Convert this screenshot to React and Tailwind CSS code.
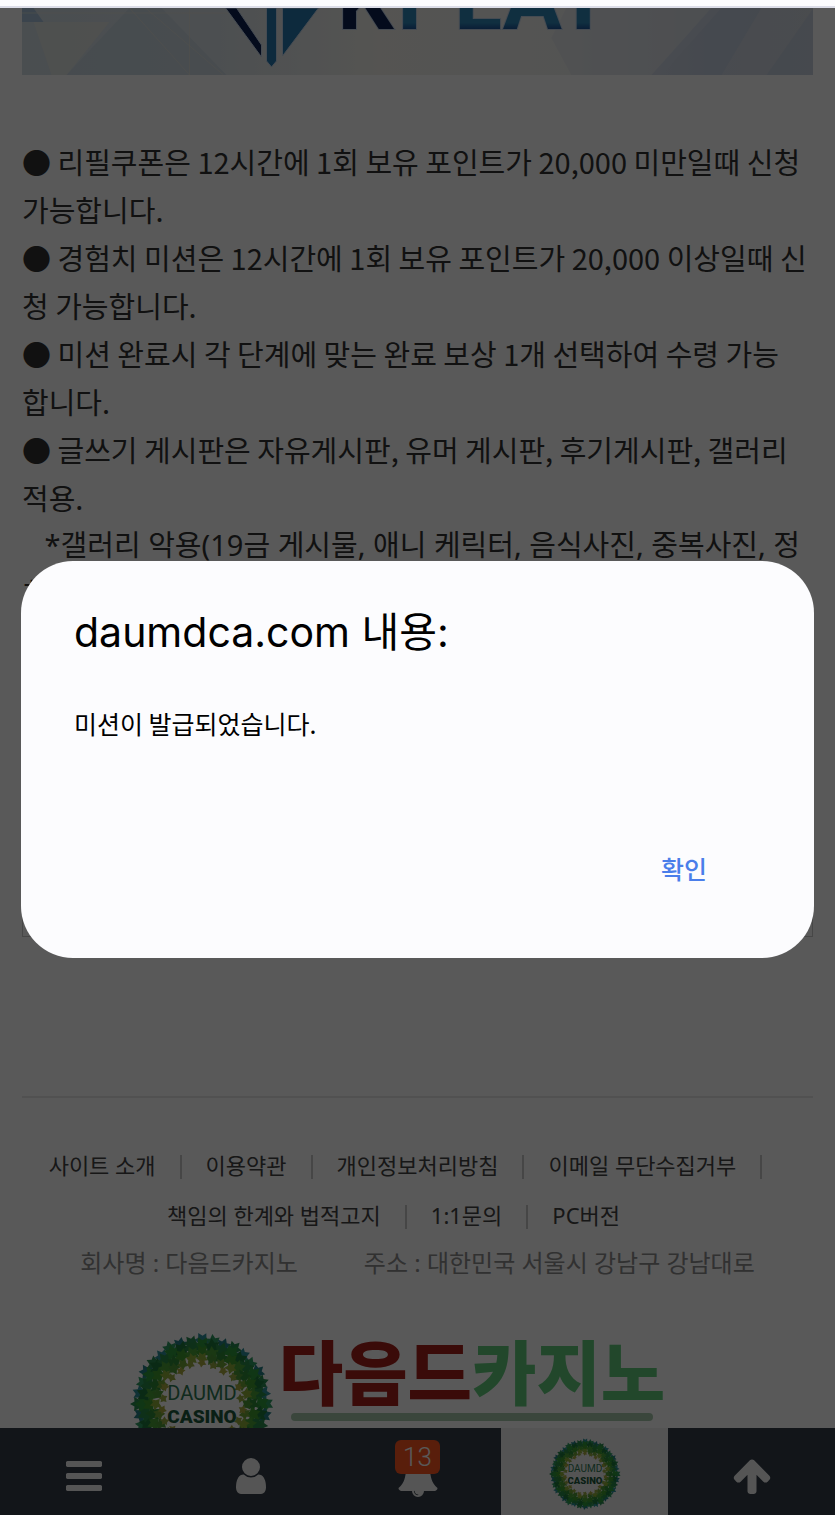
import React from 'react';

const notices = [
  ['● 리필쿠폰은 12시간에 1회 보유 포인트가 20,000 미만일때 신청 가능합니다.'],
  ['● 경험치 미션은 12시간에 1회 보유 포인트가 20,000 이상일때 신청 가능합니다.'],
  ['● 미션 완료시 각 단계에 맞는 완료 보상 1개 선택하여 수령 가능', '합니다.'],
  ['● 글쓰기 게시판은 자유게시판, 유머 게시판, 후기게시판, 갤러리 적용.'],
];

const footerLinks = [
  '사이트 소개',
  '이용약관',
  '개인정보처리방침',
  '이메일 무단수집거부',
  '책임의 한계와 법적고지',
  '1:1문의',
  'PC버전',
];

// Rings of leaves, from the outside in
const rings = [
  { count: 36, radius: 64, size: 1, colors: ['#2f8f9a', '#2f9a63', '#257f86', '#2a8a50'] },
  { count: 36, radius: 59, size: 1.1, colors: ['#2f9a3c', '#1f7a3c', '#2a8a48'] },
  { count: 32, radius: 52, size: 1, colors: ['#3f9a30', '#4aa038', '#2f8a38'] },
  { count: 28, radius: 46, size: 0.8, colors: ['#8fb03a', '#4f9838', '#6fa438'] },
  { count: 22, radius: 41, size: 0.6, colors: ['#a8a840', '#98aa44'] },
];

function WreathLogo({ className }) {
  return (
    <svg className={className} viewBox="0 0 144 144" role="img" aria-label="DAUMD CASINO">
      {rings.map((ring) =>
        Array.from({ length: ring.count }, (_, i) => (
          <path
            key={`${ring.radius}-${i}`}
            d="M0-8L2.500-3.500 7-4 4.500 1 5 6 0 4-5 6-4.500 1-7-4-2.500-3.500z"
            fill={ring.colors[i % ring.colors.length]}
            transform={`rotate(${(360 / ring.count) * i} 72 72) translate(72 ${72 - ring.radius + (i % 3)}) rotate(${(i % 5) * 14 - 28}) scale(${ring.size})`}
          />
        ))
      )}
      <text x="72" y="68" textAnchor="middle" fontFamily="Roboto, sans-serif" fontSize="20" fill="#2f7a55">
        DAUMD
      </text>
      <text x="72" y="91" textAnchor="middle" fontFamily="Roboto, sans-serif" fontSize="19" fontWeight="900" fill="#1d5a3c">
        CASINO
      </text>
    </svg>
  );
}

function Banner() {
  return (
    <svg className="block h-[67px] w-full" viewBox="0 0 792 67" preserveAspectRatio="xMidYMid slice" role="img" aria-label="KPLAY">
      <defs>
        <linearGradient id="sky" x1="0" x2="1" y1="0" y2="0">
          <stop offset="0" stopColor="#d3dee6" />
          <stop offset="0.25" stopColor="#dbe3e8" />
          <stop offset="0.45" stopColor="#f2f1ec" />
          <stop offset="0.7" stopColor="#eeefee" />
          <stop offset="0.88" stopColor="#cfd7e4" />
          <stop offset="1" stopColor="#d3d9e0" />
        </linearGradient>
        <linearGradient id="blue" gradientUnits="userSpaceOnUse" x1="0" x2="0" y1="0" y2="21">
          <stop offset="0.7" stopColor="#2f86b8" />
          <stop offset="1" stopColor="#1d559a" />
        </linearGradient>
      </defs>
      <rect width="792" height="67" fill="url(#sky)" />
      <path d="M0 0h12l10 14H0z" fill="#a8c4dc" />
      <path d="M108 0L45 67H205L140 0z" fill="#c4d3df" opacity="0.6" />
      <path d="M12 14H88L45 67H30z" fill="#ece9dc" opacity="0.5" />
      <path d="M108 0l60 67M124 0l78 67M168 0v67M0 5h210" stroke="#e8e4d8" strokeWidth="1" opacity="0.6" fill="none" />
      <path d="M530 30L550 67H640L700 0H545z" fill="#dfe4ea" opacity="0.7" />
      <path d="M690 0L630 67H700L740 0zM792 0L745 67H792z" fill="#b4c4de" opacity="0.35" />
      <g stroke="#c6d6ea" strokeWidth="1">
        <path d="M204 0h11l25 37v12z" fill="#0c2050" />
        <path d="M245 0h10v53l-5 6-5-6z" fill="#2678b0" />
        <path d="M261 0h36l-36 48z" fill="#2678b0" />
      </g>
      <g fontFamily="Roboto, sans-serif" fontWeight="700" fontSize="88" stroke="#c6d6ea" strokeWidth="2" paintOrder="stroke">
        <text x="316" y="21" fill="#0c2050">K</text>
        <text x="376" y="21" fill="url(#blue)">PLAY</text>
      </g>
    </svg>
  );
}

function NavIcon({ d }) {
  return (
    <svg className="mt-2 size-[42px] fill-current" viewBox="0 0 1792 1792" aria-hidden="true">
      <path d={d} />
    </svg>
  );
}

const icons = {
  menu: 'M1664 1344v128q0 26-19 45t-45 19h-1408q-26 0-45-19t-19-45v-128q0-26 19-45t45-19h1408q26 0 45 19t19 45zm0-512v128q0 26-19 45t-45 19h-1408q-26 0-45-19t-19-45v-128q0-26 19-45t45-19h1408q26 0 45 19t19 45zm0-512v128q0 26-19 45t-45 19h-1408q-26 0-45-19t-19-45v-128q0-26 19-45t45-19h1408q26 0 45 19t19 45z',
  user: 'M1536 1399q0 109-62.5 187t-150.5 78h-854q-88 0-150.5-78t-62.5-187q0-85 8.5-160.5t31.5-152 58.5-131 94-89 134.500-34.500q131 128 313 128t313-128q76 0 134.500 34.500t94 89 58.500 131 31.500 152 8.500 160.500zm-256-887q0 159-112.500 271.500t-271.500 112.500-271.500-112.500-112.500-271.500 112.500-271.500 271.500-112.500 271.500 112.500 112.500 271.500z',
  bell: 'M912 1696q0-16-16-16-59 0-101.500-42.500t-42.500-101.500q0-16-16-16t-16 16q0 73 51.500 124.500t124.500 51.500q16 0 16-16zm816-288q0 52-38 90t-90 38h-448q0 106-75 181t-181 75-181-75-75-181h-448q-52 0-90-38t-38-90q50-42 91-88t85-119.500 74.500-158.500 50-206 19.500-260q0-152 117-282.500t307-158.500q-8-19-8-39 0-40 28-68t68-28 68 28 28 68q0 20-8 39 190 28 307 158.500t117 282.500q0 139 19.500 260t50 206 74.500 158.500 85 119.500 91 88z',
  up: 'M1675 971q0 51-37 90l-75 75q-38 38-91 38-54 0-90-38l-294-293v704q0 52-37.500 84.500t-90.500 32.500h-128q-53 0-90.500-32.500t-37.500-84.500v-704l-294 293q-36 38-90 38t-90-38l-75-75q-38-38-38-90 0-53 38-91l651-651q35-37 90-37 54 0 91 37l651 651q37 39 37 91z',
};

function BottomNav() {
  const item = 'relative flex h-full items-center justify-center';

  return (
    <nav className="fixed inset-x-0 bottom-0 grid h-[87px] grid-cols-5 bg-[#343e49] text-[#f4f4f4]">
      <button type="button" aria-label="메뉴" className={item}>
        <NavIcon d={icons.menu} />
      </button>
      <button type="button" aria-label="내 정보" className={item}>
        <NavIcon d={icons.user} />
      </button>
      <button type="button" aria-label="알림" className={item}>
        <NavIcon d={icons.bell} />
        <span className="absolute top-3 rounded-md bg-[#ff5722] px-2 font-[Roboto,sans-serif] text-[26px] leading-[34px] font-light text-white">
          13
        </span>
      </button>
      <a href="#home" className={`${item} bg-[#efefef]`}>
        <WreathLogo className="mt-1 size-[72px]" />
      </a>
      <button type="button" aria-label="맨 위로" className={item}>
        <NavIcon d={icons.up} />
      </button>
    </nav>
  );
}

function AlertDialog() {
  return (
    <div className="fixed inset-x-0 top-2 bottom-0 flex items-center justify-center bg-black/65 px-[21px] pb-1">
      <div
        role="alertdialog"
        aria-labelledby="alert-title"
        aria-describedby="alert-message"
        className="flex min-h-[397px] w-full flex-col rounded-[52px] bg-[#fcfcfe] px-[53px] pt-[39px] pb-[65px] text-black"
      >
        <h2 id="alert-title" className="font-[Inter,'Noto_Sans_CJK_KR',sans-serif] text-[41px] leading-[64px]">
          daumdca.com 내용:
        </h2>
        <p id="alert-message" className="mt-[39px] text-[25px] leading-10">
          미션이 발급되었습니다.
        </p>
        <button type="button" className="mt-auto mr-[54px] self-end text-[25px] leading-[50px] font-medium text-[#4a7eea]">
          확인
        </button>
      </div>
    </div>
  );
}

function App() {
  return (
    <div className="min-h-screen bg-[#fefefe] font-['Noto_Sans_CJK_KR',sans-serif]">
      <div className="h-2 border-b-2 border-[#dcdde8] bg-[#fcfcfe]" />

      <main className="px-[22px]">
        <Banner />

        <div className="mt-[62px] text-[29px] leading-[48px] text-[#333]">
          {notices.map(([first, rest]) => (
            <p key={first}>
              {first}
              {rest && <br />}
              {rest}
            </p>
          ))}
          <p className="font-['Noto_Sans','Noto_Sans_CJK_KR',sans-serif]">
            &nbsp;&nbsp; *갤러리 악용(19금 게시물, 애니 케릭터, 음식사진, 중복사진, 정치
          </p>
        </div>
        <div className="mt-[72px] h-[248px] border border-[#ccc]" />
      </main>

      <footer className="mx-[22px] mt-[159px] h-[418px] overflow-hidden border-t-2 border-[#e8e8e8] pt-[42px] text-center font-['Noto_Sans','Noto_Sans_CJK_KR',sans-serif]">
        <ul className="-ml-12 flex flex-wrap justify-center text-[22px] leading-[50px] text-[#444]">
          {footerLinks.map((link, index) => (
            <li key={link} className="flex items-center">
              <a href="#footer" className="px-6">{link}</a>
              {index < footerLinks.length - 1 && <span className="mt-1 h-6 w-[2px] bg-[#c8c8c8]" />}
            </li>
          ))}
        </ul>
        <p className="flex justify-center gap-[66px] text-2xl leading-[46px] text-[#8c8c8c]">
          <span>회사명 : 다음드카지노</span>
          <span>주소 : 대한민국 서울시 강남구 강남대로</span>
        </p>
        <div className="mt-[46px] flex justify-center gap-[5px] pr-10">
          <WreathLogo className="size-36" />
          <div className="mt-[2px]">
            <p className="text-[70px] leading-[79px] font-black text-[#62cc7d]">
              <span className="text-[#a5221c]">다음드</span>카지노
            </p>
            <div className="mx-3 h-2 rounded-full bg-[#a6c8ac]" />
          </div>
        </div>
      </footer>

      <BottomNav />
      <AlertDialog />
    </div>
  );
}

export default App;
